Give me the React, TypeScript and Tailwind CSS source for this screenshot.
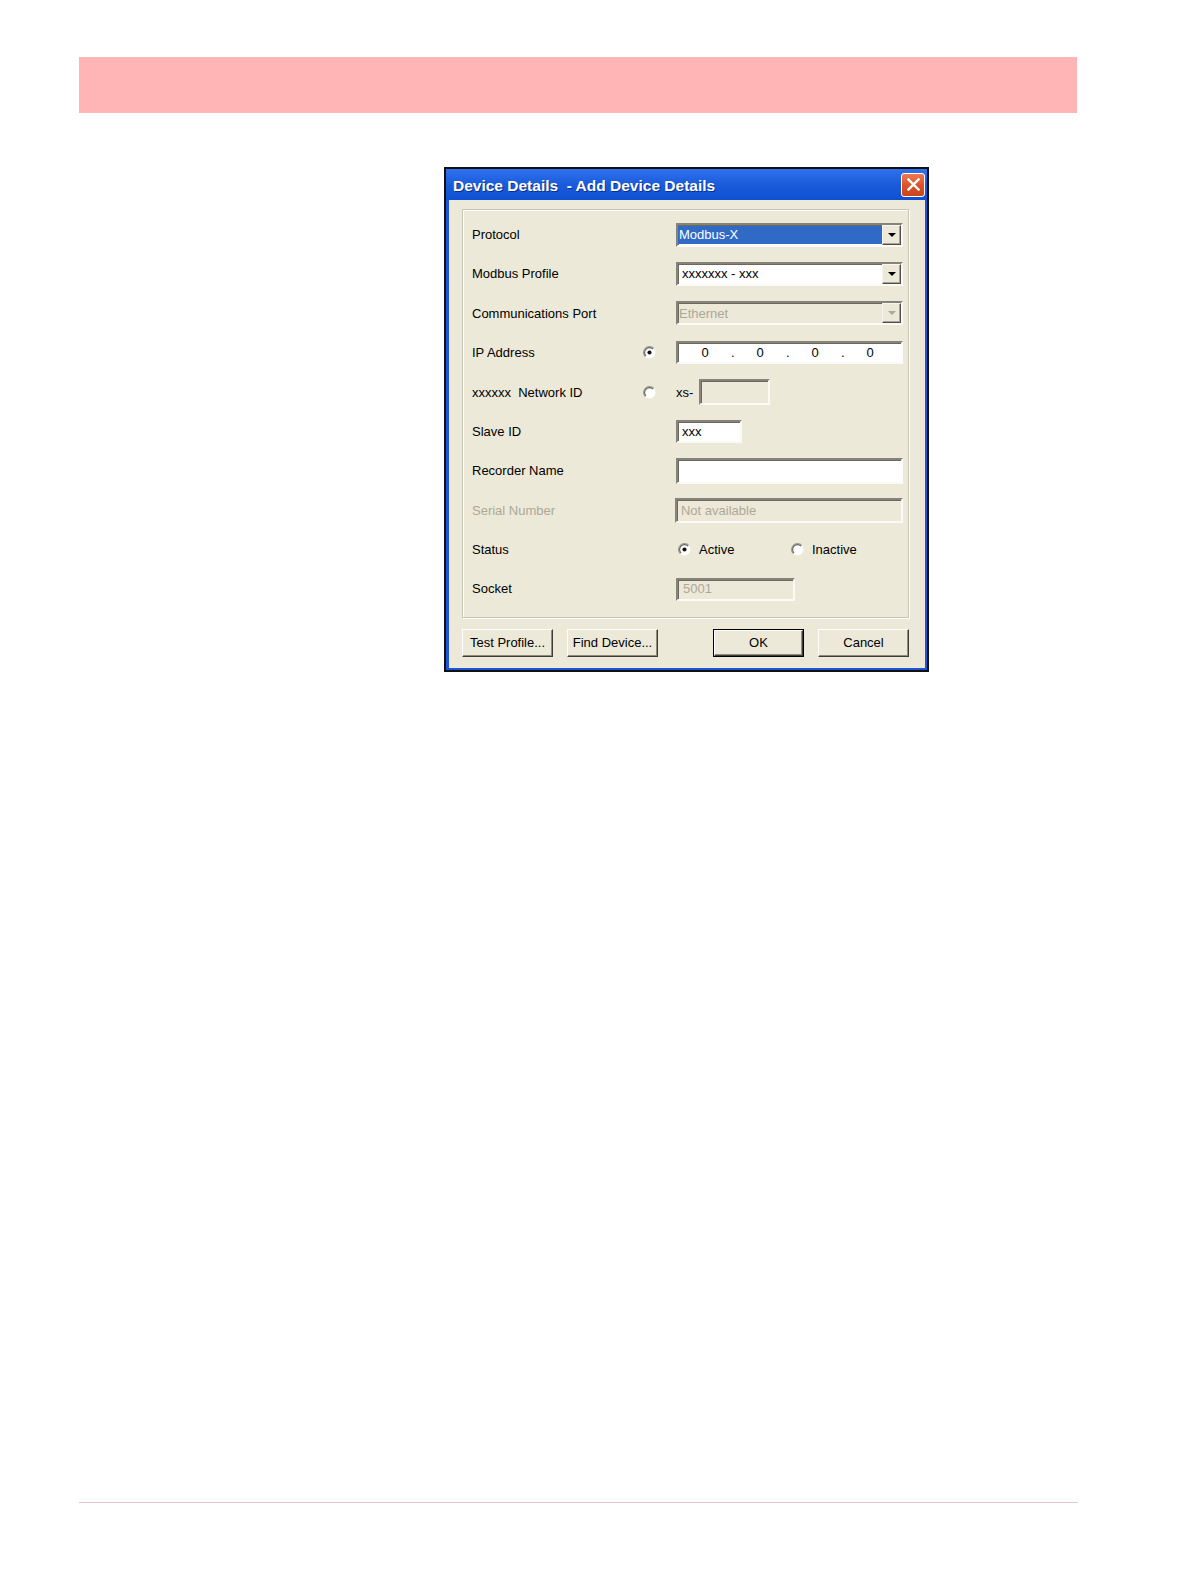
import type { ReactNode } from "react";

function Radio({ checked }: { checked?: boolean }) {
  return (
    <svg width="13" height="13" viewBox="0 0 12 12" className="shrink-0">
      <circle cx="6" cy="6" r="5.5" fill="#fff" />
      <path d="M9.9 2.1 A5.5 5.5 0 0 0 2.1 9.9" fill="none" stroke="#9d9a8c" strokeWidth="1" />
      <path d="M9.2 2.8 A4.5 4.5 0 0 0 2.8 9.2" fill="none" stroke="#5e5c54" strokeWidth="1" />
      {checked && <circle cx="6" cy="6" r="1.9" fill="#111" />}
    </svg>
  );
}

function Sunken({ className, children }: { className: string; children?: ReactNode }) {
  return (
    <div
      className={`flex items-center border-2 border-t-[#86847a] border-l-[#86847a] border-b-[#fbfaf6] border-r-[#fbfaf6] shadow-[inset_1px_1px_0_#6a685f] ${className}`}
    >
      {children}
    </div>
  );
}

function DropButton({ disabled }: { disabled?: boolean }) {
  return (
    <div className="flex h-[20px] w-[19px] shrink-0 items-center justify-center border border-t-[#f6f5f0] border-l-[#f6f5f0] border-b-[#4f4e48] border-r-[#4f4e48] bg-[#ece9d8] shadow-[inset_-1px_-1px_0_#a8a596]">
      <svg width="8" height="4" viewBox="0 0 8 4">
        <polygon points="0,0 8,0 4,4" fill={disabled ? "#aca899" : "#000"} />
      </svg>
    </div>
  );
}

function Combo({ value, selected, disabled }: { value: string; selected?: boolean; disabled?: boolean }) {
  return (
    <Sunken className={`h-[24px] w-[227px] ${disabled ? "bg-[#ece9d8]" : "bg-white"}`}>
      <div className="flex h-full flex-1 py-px">
        <div
          className={`flex h-full flex-1 items-center ${
            selected ? "bg-[#316ac5] pl-[1px] text-white" : disabled ? "pl-[1px] text-[#aca899]" : "pl-[4px] text-black"
          }`}
        >
          {value}
        </div>
      </div>
      <DropButton disabled={disabled} />
    </Sunken>
  );
}

function Row({ label, dim, radio, children }: { label: string; dim?: boolean; radio?: ReactNode; children?: ReactNode }) {
  return (
    <div className="flex h-[39.4px] items-center">
      <div className={`w-[171px] whitespace-pre ${dim ? "text-[#aca899]" : "text-black"}`}>{label}</div>
      <div className="flex w-[12px] items-center">{radio}</div>
      <div className="w-[21px]" />
      <div className="flex flex-1 items-center">{children}</div>
    </div>
  );
}

function Btn({ children, isDefault }: { children: ReactNode; isDefault?: boolean }) {
  return (
    <div className={`h-[28px] w-[91px] bg-[#ece9d8] ${isDefault ? "border border-black" : ""}`}>
      <div className="flex h-full w-full items-center justify-center border border-t-[#ffffff] border-l-[#ffffff] border-b-[#3d3c37] border-r-[#3d3c37] text-black shadow-[inset_-1px_-1px_0_#8f8c7e]">
        {children}
      </div>
    </div>
  );
}

export default function App() {
  return (
    <div className="min-h-[1588px] bg-white font-['Liberation_Sans',Arial,sans-serif] text-[13px]">
      <div className="pl-[79px] pt-[57px]">
        <div className="h-[56px] w-[998px] bg-[#ffb5b5]" />

        {/* dialog */}
        <div className="ml-[365px] mt-[54px] w-[485px] border-2 border-[#101010] bg-[#1b56d6]">
          <div className="flex h-[31px] items-center justify-between bg-gradient-to-b from-[#3072ec] via-[#1a5bdc] to-[#0f4fd2] pl-[7px] pr-[2px]">
            <span className="whitespace-pre pt-[2px] text-[15.5px] font-bold text-white [text-shadow:1px_1px_0_#0b2f8a]">
              {"Device Details  - Add Device Details"}
            </span>
            <div className="flex h-[24px] w-[24px] items-center justify-center rounded-[3px] border border-white bg-gradient-to-b from-[#ec7a52] via-[#dd5429] to-[#c9431c]">
              <svg width="13" height="13" viewBox="0 0 13 13">
                <path d="M1.5 1.5 L11.5 11.5 M11.5 1.5 L1.5 11.5" stroke="#fff" strokeWidth="2.4" strokeLinecap="square" />
              </svg>
            </div>
          </div>
          <div className="pb-[2px] pl-[3px] pr-[2px]">
            <div className="h-[468px] bg-[#ece9d8] pl-[13px] pt-[9px]">
              <div className="h-[409px] w-[447px] border border-[#c9c6b6] pl-[9px] pr-[5px] pt-[5px] shadow-[inset_1px_1px_0_#fff,1px_1px_0_#fff]">
                <Row label="Protocol">
                  <Combo value="Modbus-X" selected />
                </Row>
                <Row label="Modbus Profile">
                  <Combo value="xxxxxxx - xxx" />
                </Row>
                <Row label="Communications Port">
                  <Combo value="Ethernet" disabled />
                </Row>
                <Row label="IP Address" radio={<Radio checked />}>
                  <Sunken className="h-[23px] w-[227px] bg-white pl-[1px] text-black">
                    {["0", "0", "0", "0"].map((d, i) => (
                      <div key={i} className="flex items-center">
                        <span className="w-[52px] text-center">{d}</span>
                        {i < 3 && <span className="w-[3px] text-center">.</span>}
                      </div>
                    ))}
                  </Sunken>
                </Row>
                <Row label={"xxxxxx  Network ID"} radio={<Radio />}>
                  <span className="w-[23px] text-black">xs-</span>
                  <Sunken className="h-[26px] w-[71px] bg-[#ece9d8]" />
                </Row>
                <Row label="Slave ID">
                  <Sunken className="h-[23px] w-[66px] bg-white pl-[4px] text-black">xxx</Sunken>
                </Row>
                <Row label="Recorder Name">
                  <Sunken className="h-[26px] w-[227px] bg-white" />
                </Row>
                <Row label="Serial Number" dim>
                  <Sunken className="h-[25px] w-[228px] bg-[#ece9d8] pl-[4px] text-[#aca899]">Not available</Sunken>
                </Row>
                <Row label="Status">
                  <div className="flex items-center pl-[2px]">
                    <Radio checked />
                    <span className="ml-[8px] w-[92px] text-black">Active</span>
                    <Radio />
                    <span className="ml-[8px] text-black">Inactive</span>
                  </div>
                </Row>
                <Row label="Socket">
                  <Sunken className="h-[23px] w-[119px] bg-[#ece9d8] pl-[5px] text-[#aca899]">5001</Sunken>
                </Row>
              </div>
              <div className="mt-[11px] flex w-[447px] justify-between">
                <div className="flex gap-[14px]">
                  <Btn>Test Profile...</Btn>
                  <Btn>Find Device...</Btn>
                </div>
                <div className="flex gap-[14px]">
                  <Btn isDefault>OK</Btn>
                  <Btn>Cancel</Btn>
                </div>
              </div>
            </div>
          </div>
        </div>

        <div className="mt-[830px] h-px w-[999px] bg-[#e6c6cb]" />
      </div>
    </div>
  );
}
